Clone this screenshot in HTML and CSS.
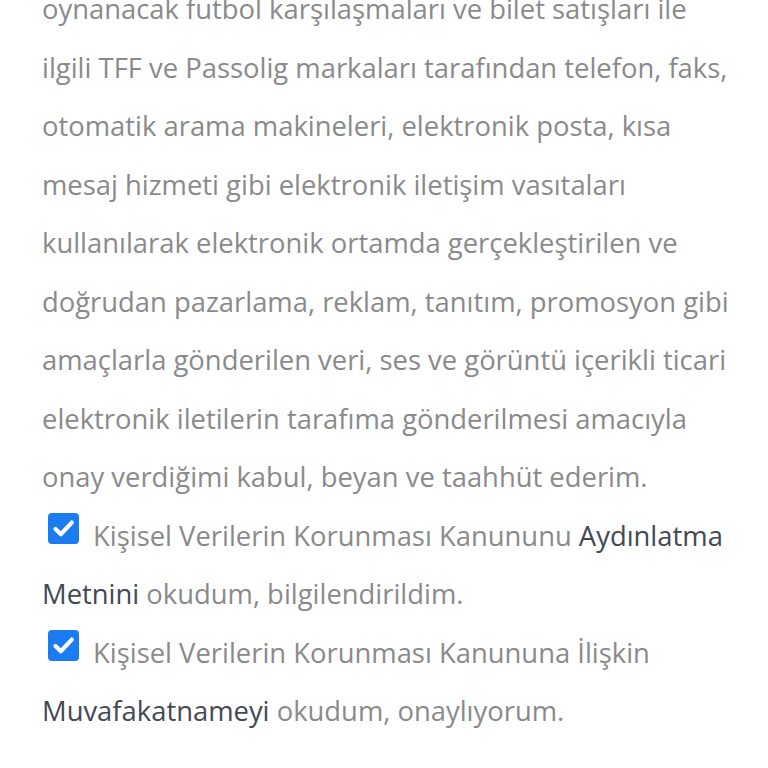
FILE: index.html
```html
<!DOCTYPE html>
<html>
<head>
    <title>İzin Metni</title>
    <link rel="stylesheet" href="styles.css">
</head>
<body>
    <div class="consent">
        <p class="consent-text">
            oynanacak futbol karşılaşmaları ve bilet satışları ile
            ilgili TFF ve Passolig markaları tarafından telefon, faks,
            otomatik arama makineleri, elektronik posta, kısa
            mesaj hizmeti gibi elektronik iletişim vasıtaları
            kullanılarak elektronik ortamda gerçekleştirilen ve
            doğrudan pazarlama, reklam, tanıtım, promosyon gibi
            amaçlarla gönderilen veri, ses ve görüntü içerikli ticari
            elektronik iletilerin tarafıma gönderilmesi amacıyla
            onay verdiğimi kabul, beyan ve taahhüt ederim.
        </p>

        <label class="check-row"><span class="check-box">
                <svg viewBox="0 0 31 31" width="31" height="31">
                    <path d="M7.5 16 L12.8 21.2 L23.8 9.6" fill="none" stroke="white" stroke-width="4.2" stroke-linecap="round" stroke-linejoin="round"/>
                </svg>
            </span>Kişisel Verilerin Korunması Kanununu <a href="#" class="doc-link">Aydınlatma Metnini</a> okudum, bilgilendirildim.</label>

        <label class="check-row"><span class="check-box">
                <svg viewBox="0 0 31 31" width="31" height="31">
                    <path d="M7.5 16 L12.8 21.2 L23.8 9.6" fill="none" stroke="white" stroke-width="4.2" stroke-linecap="round" stroke-linejoin="round"/>
                </svg>
            </span>Kişisel Verilerin Korunması Kanununa İlişkin <a href="#" class="doc-link">Muvafakatnameyi</a> okudum, onaylıyorum.</label>
    </div>
</body>
</html>
```

FILE: styles.css
```css
body {
    margin: 0;
    background-color: white;
    font-family: "Open Sans", "Noto Sans", sans-serif;
}

.consent {
    margin-top: -20px;
    padding: 0 36px 0 42px;
    font-size: 27.4px;
    line-height: 58.5px;
    color: #8a8a8a;
}

.consent-text {
    margin: 0;
}

.check-row {
    display: block;
}

.check-box {
    display: inline-block;
    width: 31px;
    height: 31px;
    margin: 0 14px 0 6px;
    border-radius: 4px;
    background-color: #1a7cf0;
    vertical-align: 2px;
}

.check-box svg {
    display: block;
}

.doc-link {
    color: #434952;
    text-decoration: none;
}
```
